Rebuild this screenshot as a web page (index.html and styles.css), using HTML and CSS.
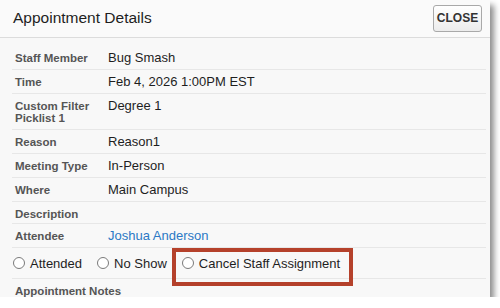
FILE: index.html
```html
<!DOCTYPE html>
<html>
<head>
<meta charset="utf-8">
<title>Appointment Details</title>
<link rel="stylesheet" href="styles.css">
</head>
<body>
<div class="dialog">
  <div class="dialog-head">
    <h1 class="dialog-title">Appointment Details</h1>
    <button class="close-btn" type="button">CLOSE</button>
  </div>
  <div class="dialog-body">
    <div class="row"><div class="label">Staff Member</div><div class="value">Bug Smash</div></div>
    <div class="row"><div class="label">Time</div><div class="value">Feb 4, 2026 1:00PM EST</div></div>
    <div class="row"><div class="label">Custom Filter Picklist 1</div><div class="value">Degree 1</div></div>
    <div class="row"><div class="label">Reason</div><div class="value">Reason1</div></div>
    <div class="row"><div class="label">Meeting Type</div><div class="value">In-Person</div></div>
    <div class="row"><div class="label">Where</div><div class="value">Main Campus</div></div>
    <div class="row short"><div class="label">Description</div><div class="value"></div></div>
    <div class="row"><div class="label">Attendee</div><div class="value"><a class="link" href="#">Joshua Anderson</a></div></div>
    <div class="row radios">
      <label class="opt"><input type="radio" name="status">Attended</label>
      <label class="opt"><input type="radio" name="status">No Show</label>
      <label class="opt"><input type="radio" name="status">Cancel Staff Assignment</label>
      <div class="highlight"></div>
    </div>
    <div class="row notes"><div class="label">Appointment Notes</div></div>
  </div>
</div>
</body>
</html>
```

FILE: styles.css
```css
*{margin:0;padding:0;box-sizing:border-box;}
body{background:#fff;font-family:"Liberation Sans",Arial,Helvetica,sans-serif;color:#1e1e1e;overflow:hidden;}
/* dialog */
.dialog{width:490px;height:297px;background:#f8f8f8;overflow:hidden;box-shadow:4px 5px 6px rgba(0,0,0,0.45);}
.dialog-head{height:38px;display:flex;align-items:center;justify-content:space-between;padding:0 8px 0 13px;background:#fafafa;border-bottom:1px solid #dcdcdc;}
.dialog-title{font-size:15.5px;font-weight:normal;color:#1e1e1e;margin-top:-2px;}
.close-btn{width:49px;height:27px;margin-top:-1px;border:1px solid #a9a9a9;border-radius:3px;background:linear-gradient(#ffffff,#ececec);font:bold 12px "Liberation Sans",Arial,sans-serif;color:#333;}
.dialog-body{padding:8px 4px 0 12px;}
.row{display:flex;align-items:flex-start;padding:5px 0 5px 3px;border-bottom:1px solid #e7e7e7;position:relative;}
.row.short{padding-bottom:3px;}
.label{width:93px;flex:none;font-size:11.5px;line-height:12px;font-weight:bold;color:#555;padding-top:1px;}
.notes .label{width:auto;white-space:nowrap;}
.value{font-size:13px;line-height:13px;color:#1e1e1e;}
.link{color:#2b78c5;text-decoration:none;}
.radios{padding:9px 0 8px 1px;align-items:center;gap:15px;}
.opt{display:flex;align-items:center;gap:5px;font-size:13px;line-height:13px;color:#1e1e1e;}
.opt input{appearance:none;-webkit-appearance:none;width:12px;height:12px;border:1px solid #7a7a7a;border-radius:50%;background:#fff;margin-top:-2px;}
.highlight{position:absolute;left:160px;top:0;width:181px;height:38px;border:4px solid #b5412b;}
```
